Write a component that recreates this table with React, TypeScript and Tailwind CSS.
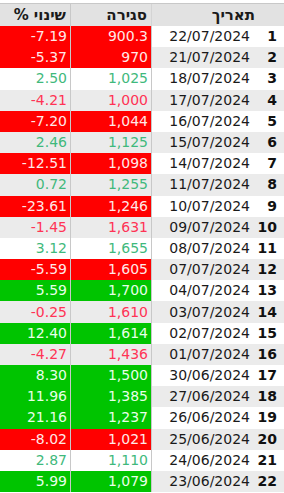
type Tone = "redBg" | "greenBg" | "red" | "green";

interface Row {
  n: number;
  date: string;
  close: string;
  change: string;
  tone: Tone;
}

const rows: Row[] = [
  { n: 1, date: "22/07/2024", close: "900.3", change: "-7.19", tone: "redBg" },
  { n: 2, date: "21/07/2024", close: "970", change: "-5.37", tone: "redBg" },
  { n: 3, date: "18/07/2024", close: "1,025", change: "2.50", tone: "green" },
  { n: 4, date: "17/07/2024", close: "1,000", change: "-4.21", tone: "red" },
  { n: 5, date: "16/07/2024", close: "1,044", change: "-7.20", tone: "redBg" },
  { n: 6, date: "15/07/2024", close: "1,125", change: "2.46", tone: "green" },
  { n: 7, date: "14/07/2024", close: "1,098", change: "-12.51", tone: "redBg" },
  { n: 8, date: "11/07/2024", close: "1,255", change: "0.72", tone: "green" },
  { n: 9, date: "10/07/2024", close: "1,246", change: "-23.61", tone: "redBg" },
  { n: 10, date: "09/07/2024", close: "1,631", change: "-1.45", tone: "red" },
  { n: 11, date: "08/07/2024", close: "1,655", change: "3.12", tone: "green" },
  { n: 12, date: "07/07/2024", close: "1,605", change: "-5.59", tone: "redBg" },
  { n: 13, date: "04/07/2024", close: "1,700", change: "5.59", tone: "greenBg" },
  { n: 14, date: "03/07/2024", close: "1,610", change: "-0.25", tone: "red" },
  { n: 15, date: "02/07/2024", close: "1,614", change: "12.40", tone: "greenBg" },
  { n: 16, date: "01/07/2024", close: "1,436", change: "-4.27", tone: "red" },
  { n: 17, date: "30/06/2024", close: "1,500", change: "8.30", tone: "greenBg" },
  { n: 18, date: "27/06/2024", close: "1,385", change: "11.96", tone: "greenBg" },
  { n: 19, date: "26/06/2024", close: "1,237", change: "21.16", tone: "greenBg" },
  { n: 20, date: "25/06/2024", close: "1,021", change: "-8.02", tone: "redBg" },
  { n: 21, date: "24/06/2024", close: "1,110", change: "2.87", tone: "green" },
  { n: 22, date: "23/06/2024", close: "1,079", change: "5.99", tone: "greenBg" },
];

const toneClass: Record<Tone, string> = {
  redBg: "bg-[#ff0000] text-[#ffe8e8]",
  greenBg: "bg-[#00c400] text-[#e8ffe8]",
  red: "text-[#ff3355]",
  green: "text-[#3fb97c]",
};

export default function App() {
  return (
    <div
      className="w-[284px] h-[493px] overflow-hidden bg-white text-[14px] text-[#1a1a1a]"
      style={{ fontFamily: '"DejaVu Sans", Verdana, sans-serif' }}
    >
      {/* top strip */}
      <div className="h-[4px] bg-white border-b border-[#c8c8c8]" />

      {/* header */}
      <div className="flex h-[22px] bg-[#e2e2e2] font-bold text-[15px] items-center">
        <div className="w-[71px] h-full flex items-center justify-end gap-[5px] pr-[4px] border-r border-[#c8c8c8]">
          <span>%</span>
          <span>שינוי</span>
        </div>
        <div className="w-[81px] h-full flex items-center justify-end pr-[4px] border-r border-[#d4d4d4]">
          סגירה
        </div>
        <div className="flex-1 h-full flex items-center justify-end pr-[29px]">תאריך</div>
      </div>

      {/* rows */}
      {rows.map((r) => {
        const rowBg = r.n % 2 === 0 ? "bg-[#ebebeb]" : "bg-white";
        const tone = toneClass[r.tone];
        return (
          <div key={r.n} className={`flex h-[21.2px] ${rowBg}`}>
            <div
              className={`w-[71px] flex items-center justify-end pr-[3px] border-r border-[#c8c8c8] ${tone}`}
            >
              {r.change}
            </div>
            <div
              className={`w-[81px] flex items-center justify-end pr-[3px] border-r border-[#c8c8c8] ${tone}`}
            >
              {r.close}
            </div>
            <div className="w-[101px] flex items-center justify-end pr-[3px]">{r.date}</div>
            <div className="flex-1 flex items-center justify-end pr-[7px] font-bold text-[#111]">
              {r.n}
            </div>
          </div>
        );
      })}
    </div>
  );
}
